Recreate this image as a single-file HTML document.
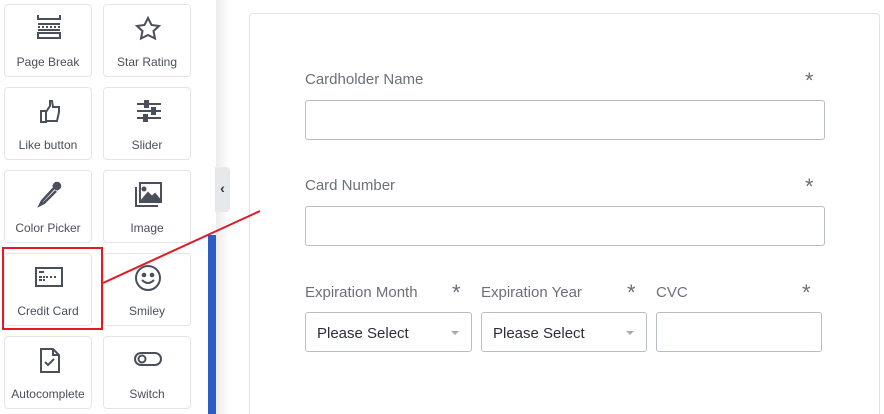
<!DOCTYPE html><html style="overflow:hidden"><head><style>
html,body{margin:0;width:884px;height:414px;overflow:hidden}
body{background:#fff;position:relative;font-family:"Liberation Sans",sans-serif}
.t{position:absolute;width:88px;height:73px;border:1px solid #e3e5e8;border-radius:4px;background:#fff;box-sizing:border-box}
.t span{position:absolute;left:0;right:0;top:50px;text-align:center;font-size:12px;color:#4a4f5c}
.t svg{position:absolute;left:29px;top:10px}
.shade{position:absolute;left:216px;top:0;width:14px;height:414px;background:linear-gradient(90deg,#ececec,#fff)}
.card{position:absolute;left:249px;top:13px;width:631px;height:401px;border:1px solid #dde4ee;border-bottom:none;border-radius:4px 4px 0 0;background:#fff;box-sizing:border-box}
.lb{position:absolute;font-size:15px;color:#6b6f78}
.ast{position:absolute;font-size:22px;color:#6b6f78}
.in{position:absolute;border:1px solid #b8bcc3;border-radius:3px;height:40px;box-sizing:border-box;background:#fff}
.sel{font-size:15px;color:#2c2f36;padding:12px 0 0 11px}
.sel:after{content:"";position:absolute;right:12px;top:18px;border:4px solid transparent;border-top-color:#aaa}
</style></head><body>
<div class="t" style="left:4px;top:4px"><svg width="30" height="34" viewBox="0 0 30 34" fill="none" stroke="#4a4f5c" stroke-width="2"><path d="M4 0v4h22V0M4 9h22M4 12h2M8 12h2M12 12h2M16 12h2M20 12h2M24 12h2M4 15h22M4 24v-6h22v6M4 23h22"/></svg><span>Page Break</span></div>
<div class="t" style="left:103px;top:4px"><svg width="30" height="34" viewBox="0 0 30 34" fill="none" stroke="#4a4f5c" stroke-width="2"><path d="M15 3l3.5 7 7.5 1-5.5 5 1.5 7.5L15 20l-7 3.5 1.5-7.5L4 11l7.5-1z"/></svg><span>Star Rating</span></div>
<div class="t" style="left:4px;top:87px"><svg width="30" height="34" viewBox="0 0 30 34" fill="none" stroke="#4a4f5c" stroke-width="2"><path d="M7 13h5v11H7zM12 14l4-6V3h2l1 6h6v5l-2 9H12"/></svg><span>Like button</span></div>
<div class="t" style="left:103px;top:87px"><svg width="30" height="34" viewBox="0 0 30 34" fill="none" stroke="#4a4f5c" stroke-width="2"><path d="M4 6h24M4 13h24M4 20h24"/><rect x="12" y="3" width="3" height="6" fill="#4a4f5c"/><rect x="19" y="10" width="3" height="6" fill="#4a4f5c"/><rect x="11" y="17" width="3" height="6" fill="#4a4f5c"/></svg><span>Slider</span></div>
<div class="t" style="left:4px;top:170px"><svg width="30" height="34" viewBox="0 0 30 34" fill="none" stroke="#4a4f5c" stroke-width="2.5"><path d="M20 7L8 20l-2 4 4-2 12-12M19 4l5 5"/><circle cx="23" cy="5" r="3" fill="#4a4f5c"/></svg><span>Color Picker</span></div>
<div class="t" style="left:103px;top:170px"><svg width="30" height="34" viewBox="0 0 30 34" fill="none" stroke="#4a4f5c" stroke-width="2"><path d="M3 6v19h22"/><rect x="7" y="2" width="21" height="19"/><path d="M9 19l6-7 4 4 3-3 5 6z" fill="#4a4f5c"/><circle cx="11" cy="8" r="1.5" fill="#4a4f5c"/></svg><span>Image</span></div>
<div class="t" style="left:4px;top:253px"><svg width="30" height="34" viewBox="0 0 30 34" fill="none" stroke="#4a4f5c" stroke-width="2"><rect x="2" y="4" width="26" height="18"/><path d="M5 8h5M5 13h3M9 13h2M12 13h2M16 13h2M20 13h2M5 16h3M9 16h2"/></svg><span>Credit Card</span></div>
<div class="t" style="left:103px;top:253px"><svg width="30" height="34" viewBox="0 0 30 34" fill="none" stroke="#4a4f5c" stroke-width="2"><circle cx="15" cy="14" r="12"/><circle cx="11" cy="11" r="1.3" fill="#4a4f5c"/><circle cx="19" cy="11" r="1.3" fill="#4a4f5c"/><path d="M9 16q6 6 12 0"/></svg><span>Smiley</span></div>
<div class="t" style="left:4px;top:336px"><svg width="30" height="34" viewBox="0 0 30 34" fill="none" stroke="#4a4f5c" stroke-width="2"><path d="M7 2h12l6 6v17H7zM19 2v6h6M11 15l3 3 6-6"/></svg><span>Autocomplete</span></div>
<div class="t" style="left:103px;top:336px"><svg width="30" height="34" viewBox="0 0 30 34" fill="none" stroke="#4a4f5c" stroke-width="2"><rect x="2" y="6" width="26" height="12" rx="6"/><circle cx="9" cy="12" r="3.5"/></svg><span>Switch</span></div>
<div style="position:absolute;left:2px;top:247px;width:97px;height:79px;border:2px solid #e01b24"></div>
<div class="shade"></div>
<div style="position:absolute;left:208px;top:235px;width:8px;height:179px;background:#2b5cc7"></div>
<div style="position:absolute;left:215px;top:167px;width:15px;height:45px;background:#e6e8eb;border-radius:0 4px 4px 0;font-size:14px;color:#333;text-align:center;line-height:43px;font-weight:bold">‹</div>
<div class="card"></div>
<div class="lb" style="left:305px;top:71px">Cardholder Name</div><div class="ast" style="left:805px;top:68px">*</div>
<div class="in" style="left:305px;top:100px;width:520px"></div>
<div class="lb" style="left:305px;top:177px">Card Number</div><div class="ast" style="left:805px;top:174px">*</div>
<div class="in" style="left:305px;top:206px;width:520px"></div>
<div class="lb" style="left:305px;top:284px">Expiration Month</div><div class="ast" style="left:452px;top:280px">*</div>
<div class="lb" style="left:481px;top:284px">Expiration Year</div><div class="ast" style="left:627px;top:280px">*</div>
<div class="lb" style="left:656px;top:284px">CVC</div><div class="ast" style="left:802px;top:280px">*</div>
<div class="in sel" style="left:305px;top:312px;width:167px">Please Select</div>
<div class="in sel" style="left:481px;top:312px;width:166px">Please Select</div>
<div class="in" style="left:656px;top:312px;width:166px"></div>
<svg style="position:absolute;left:0;top:0" width="884" height="414"><line x1="103" y1="283" x2="260" y2="211" stroke="#e01b24" stroke-width="2"/></svg>
</body></html>
